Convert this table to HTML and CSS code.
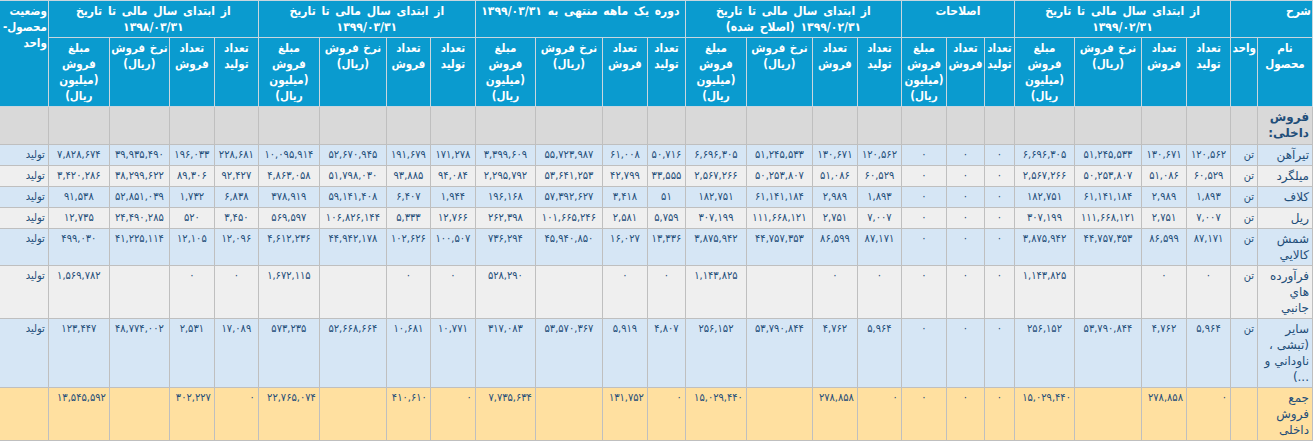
FILE: index.html
```html
<!DOCTYPE html>
<html lang="fa" dir="rtl">
<head>
<meta charset="utf-8">
<title>فروش داخلی</title>
<link rel="stylesheet" href="styles.css">
</head>
<body>
<table class="sales">
<colgroup>
<col class="w55"><col class="w27"><col class="w44"><col class="w45"><col class="w67"><col class="w60">
<col class="w30"><col class="w38"><col class="w45">
<col class="w44"><col class="w45"><col class="w66"><col class="w61">
<col class="w38"><col class="w45"><col class="w67"><col class="w60">
<col class="w45"><col class="w44"><col class="w67"><col class="w61">
<col class="w44"><col class="w45"><col class="w60"><col class="w61">
<col class="w49">
</colgroup>
<thead>
<tr class="h1">
<th colspan="2" class="start">شرح</th>
<th colspan="4">از ابتدای سال مالی تا تاریخ ۱۳۹۹/۰۲/۳۱</th>
<th colspan="3">اصلاحات</th>
<th colspan="4">از ابتدای سال مالی تا تاریخ ۱۳۹۹/۰۲/۳۱ (اصلاح شده)</th>
<th colspan="4">دوره یک ماهه منتهی به ۱۳۹۹/۰۳/۳۱</th>
<th colspan="4">از ابتدای سال مالی تا تاریخ ۱۳۹۹/۰۳/۳۱</th>
<th colspan="4">از ابتدای سال مالی تا تاریخ ۱۳۹۸/۰۳/۳۱</th>
<th rowspan="2" class="start status-h">وضعیت محصول- واحد</th>
</tr>
<tr class="h2">
<th>نام محصول</th><th class="start">واحد</th>
<th>تعداد تولید</th><th>تعداد فروش</th><th>نرخ فروش (ریال)</th><th>مبلغ فروش (میلیون ریال)</th>
<th>تعداد تولید</th><th>تعداد فروش</th><th>مبلغ فروش (میلیون ریال)</th>
<th>تعداد تولید</th><th>تعداد فروش</th><th>نرخ فروش (ریال)</th><th>مبلغ فروش (میلیون ریال)</th>
<th>تعداد تولید</th><th>تعداد فروش</th><th>نرخ فروش (ریال)</th><th>مبلغ فروش (میلیون ریال)</th>
<th>تعداد تولید</th><th>تعداد فروش</th><th>نرخ فروش (ریال)</th><th>مبلغ فروش (میلیون ریال)</th>
<th>تعداد تولید</th><th>تعداد فروش</th><th>نرخ فروش (ریال)</th><th>مبلغ فروش (میلیون ریال)</th>
</tr>
</thead>
<tbody>
<tr class="section">
<td class="name">فروش داخلی:</td><td></td><td></td><td></td><td></td><td></td><td></td><td></td><td></td><td></td><td></td><td></td><td></td><td></td><td></td><td></td><td></td><td></td><td></td><td></td><td></td><td></td><td></td><td></td><td></td><td></td>
</tr>
<tr class="odd">
<td class="name">تیرآهن</td><td class="unit">تن</td>
<td>۱۲۰,۵۶۲</td><td>۱۳۰,۶۷۱</td><td>۵۱,۲۴۵,۵۳۳</td><td>۶,۶۹۶,۳۰۵</td>
<td>۰</td><td>۰</td><td>۰</td>
<td>۱۲۰,۵۶۲</td><td>۱۳۰,۶۷۱</td><td>۵۱,۲۴۵,۵۳۳</td><td>۶,۶۹۶,۳۰۵</td>
<td>۵۰,۷۱۶</td><td>۶۱,۰۰۸</td><td>۵۵,۷۲۳,۹۸۷</td><td>۳,۳۹۹,۶۰۹</td>
<td>۱۷۱,۲۷۸</td><td>۱۹۱,۶۷۹</td><td>۵۲,۶۷۰,۹۴۵</td><td>۱۰,۰۹۵,۹۱۴</td>
<td>۲۲۸,۶۸۱</td><td>۱۹۶,۰۳۳</td><td>۳۹,۹۳۵,۴۹۰</td><td>۷,۸۲۸,۶۷۴</td>
<td class="status">تولید</td>
</tr>
<tr class="even">
<td class="name">میلگرد</td><td class="unit">تن</td>
<td>۶۰,۵۲۹</td><td>۵۱,۰۸۶</td><td>۵۰,۲۵۳,۸۰۷</td><td>۲,۵۶۷,۲۶۶</td>
<td>۰</td><td>۰</td><td>۰</td>
<td>۶۰,۵۲۹</td><td>۵۱,۰۸۶</td><td>۵۰,۲۵۳,۸۰۷</td><td>۲,۵۶۷,۲۶۶</td>
<td>۳۳,۵۵۵</td><td>۴۲,۷۹۹</td><td>۵۳,۶۴۱,۲۵۳</td><td>۲,۲۹۵,۷۹۲</td>
<td>۹۴,۰۸۴</td><td>۹۳,۸۸۵</td><td>۵۱,۷۹۸,۰۳۰</td><td>۴,۸۶۳,۰۵۸</td>
<td>۹۲,۴۲۷</td><td>۸۹,۳۰۶</td><td>۳۸,۲۹۹,۶۲۲</td><td>۳,۴۲۰,۲۸۶</td>
<td class="status">تولید</td>
</tr>
<tr class="odd">
<td class="name">کلاف</td><td class="unit">تن</td>
<td>۱,۸۹۳</td><td>۲,۹۸۹</td><td>۶۱,۱۴۱,۱۸۴</td><td>۱۸۲,۷۵۱</td>
<td>۰</td><td>۰</td><td>۰</td>
<td>۱,۸۹۳</td><td>۲,۹۸۹</td><td>۶۱,۱۴۱,۱۸۴</td><td>۱۸۲,۷۵۱</td>
<td>۵۱</td><td>۳,۴۱۸</td><td>۵۷,۳۹۲,۶۲۷</td><td>۱۹۶,۱۶۸</td>
<td>۱,۹۴۴</td><td>۶,۴۰۷</td><td>۵۹,۱۴۱,۴۰۸</td><td>۳۷۸,۹۱۹</td>
<td>۶,۸۳۸</td><td>۱,۷۳۲</td><td>۵۲,۸۵۱,۰۳۹</td><td>۹۱,۵۳۸</td>
<td class="status">تولید</td>
</tr>
<tr class="even">
<td class="name">ریل</td><td class="unit">تن</td>
<td>۷,۰۰۷</td><td>۲,۷۵۱</td><td>۱۱۱,۶۶۸,۱۲۱</td><td>۳۰۷,۱۹۹</td>
<td>۰</td><td>۰</td><td>۰</td>
<td>۷,۰۰۷</td><td>۲,۷۵۱</td><td>۱۱۱,۶۶۸,۱۲۱</td><td>۳۰۷,۱۹۹</td>
<td>۵,۷۵۹</td><td>۲,۵۸۱</td><td>۱۰۱,۶۶۵,۲۴۶</td><td>۲۶۲,۳۹۸</td>
<td>۱۲,۷۶۶</td><td>۵,۳۳۳</td><td>۱۰۶,۸۲۶,۱۴۴</td><td>۵۶۹,۵۹۷</td>
<td>۳,۴۵۰</td><td>۵۲۰</td><td>۲۴,۴۹۰,۲۸۵</td><td>۱۲,۷۳۵</td>
<td class="status">تولید</td>
</tr>
<tr class="odd">
<td class="name">شمش کالایي</td><td class="unit">تن</td>
<td>۸۷,۱۷۱</td><td>۸۶,۵۹۹</td><td>۴۴,۷۵۷,۳۵۳</td><td>۳,۸۷۵,۹۴۲</td>
<td>۰</td><td>۰</td><td>۰</td>
<td>۸۷,۱۷۱</td><td>۸۶,۵۹۹</td><td>۴۴,۷۵۷,۳۵۳</td><td>۳,۸۷۵,۹۴۲</td>
<td>۱۳,۳۳۶</td><td>۱۶,۰۲۷</td><td>۴۵,۹۴۰,۸۵۰</td><td>۷۳۶,۲۹۴</td>
<td>۱۰۰,۵۰۷</td><td>۱۰۲,۶۲۶</td><td>۴۴,۹۴۲,۱۷۸</td><td>۴,۶۱۲,۲۳۶</td>
<td>۱۲,۰۹۶</td><td>۱۲,۱۰۵</td><td>۴۱,۲۲۵,۱۱۴</td><td>۴۹۹,۰۳۰</td>
<td class="status">تولید</td>
</tr>
<tr class="even">
<td class="name">فرآورده هاي جانبي</td><td class="unit">تن</td>
<td>۰</td><td>۰</td><td></td><td>۱,۱۴۳,۸۲۵</td>
<td>۰</td><td>۰</td><td>۰</td>
<td>۰</td><td>۰</td><td></td><td>۱,۱۴۳,۸۲۵</td>
<td>۰</td><td>۰</td><td></td><td>۵۲۸,۲۹۰</td>
<td>۰</td><td>۰</td><td></td><td>۱,۶۷۲,۱۱۵</td>
<td>۰</td><td>۰</td><td></td><td>۱,۵۶۹,۷۸۲</td>
<td class="status">تولید</td>
</tr>
<tr class="odd">
<td class="name">سایر (تبشی ، ناوداني و ...)</td><td class="unit">تن</td>
<td>۵,۹۶۴</td><td>۴,۷۶۲</td><td>۵۳,۷۹۰,۸۴۴</td><td>۲۵۶,۱۵۲</td>
<td>۰</td><td>۰</td><td>۰</td>
<td>۵,۹۶۴</td><td>۴,۷۶۲</td><td>۵۳,۷۹۰,۸۴۴</td><td>۲۵۶,۱۵۲</td>
<td>۴,۸۰۷</td><td>۵,۹۱۹</td><td>۵۳,۵۷۰,۳۶۷</td><td>۳۱۷,۰۸۳</td>
<td>۱۰,۷۷۱</td><td>۱۰,۶۸۱</td><td>۵۲,۶۶۸,۶۶۴</td><td>۵۷۳,۲۳۵</td>
<td>۱۷,۰۸۹</td><td>۲,۵۳۱</td><td>۴۸,۷۷۴,۰۰۲</td><td>۱۲۳,۴۴۷</td>
<td class="status">تولید</td>
</tr>
<tr class="total">
<td class="name">جمع فروش داخلی</td><td></td>
<td>۰</td><td>۲۷۸,۸۵۸</td><td></td><td>۱۵,۰۲۹,۴۴۰</td>
<td class="mid">۰</td><td class="mid">۰</td><td class="mid">۰</td>
<td>۰</td><td>۲۷۸,۸۵۸</td><td></td><td>۱۵,۰۲۹,۴۴۰</td>
<td>۰</td><td>۱۳۱,۷۵۲</td><td></td><td>۷,۷۳۵,۶۳۴</td>
<td>۰</td><td>۴۱۰,۶۱۰</td><td></td><td>۲۲,۷۶۵,۰۷۴</td>
<td>۰</td><td>۳۰۲,۲۲۷</td><td></td><td>۱۳,۵۴۵,۵۹۲</td>
<td></td>
</tr>
</tbody>
</table>
</body>
</html>
```

FILE: styles.css
```css
html, body {
  margin: 0;
  padding: 0;
  background: #ffffff;
}

.sales {
  width: 1313px;
  table-layout: fixed;
  border-collapse: collapse;
  font-family: "DejaVu Sans Condensed", "DejaVu Sans", sans-serif;
  font-size: 11px;
  line-height: 16px;
  color: #1f4e79;
}

.w27 { width: 27px; }
.w30 { width: 30px; }
.w38 { width: 38px; }
.w44 { width: 44px; }
.w45 { width: 45px; }
.w49 { width: 49px; }
.w55 { width: 55px; }
.w60 { width: 60px; }
.w61 { width: 61px; }
.w66 { width: 66px; }
.w67 { width: 67px; }

.sales th,
.sales td {
  border: 1px solid #bfbfbf;
  padding: 2px 3px;
  vertical-align: top;
}

.sales td {
  overflow: hidden;
}

.sales th {
  background: #0a9bcf;
  color: #ffffff;
  font-family: "DejaVu Sans Condensed", "DejaVu Sans", sans-serif;
  font-weight: bold;
  text-align: center;
  border-color: #c9d6de;
  padding: 2px 1px;
}

.h1 th {
  height: 31px;
  font-size: 12px;
  word-spacing: 2px;
}

.h2 th {
  height: 63px;
  font-size: 11.5px;
  word-spacing: 1px;
}

.sales th.start {
  text-align: right;
}

.sales th.status-h {
  font-size: 11.5px;
  word-spacing: 0;
  padding: 2px 1px 2px 0;
}

.sales td {
  text-align: center;
}

.sales td.name {
  text-align: right;
  font-family: "DejaVu Sans", sans-serif;
  font-size: 12px;
}

.sales td.unit,
.sales td.status {
  text-align: right;
}

.section td {
  background: #d9d9d9;
  height: 33px;
}

.section td.name {
  font-weight: bold;
}

.odd td {
  background: #d6e6f5;
}

.even td {
  background: #efefef;
}

.total td {
  background: #ffe0a0;
  text-align: right;
}

.total td.mid {
  text-align: center;
}
```
